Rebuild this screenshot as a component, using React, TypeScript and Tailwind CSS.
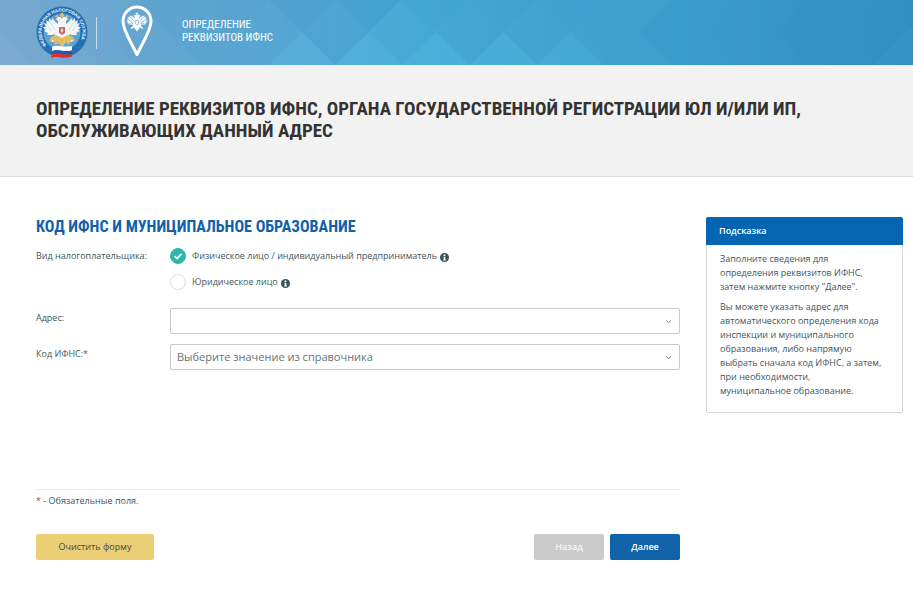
import React, { useState } from "react";

const shades = [
  { d: "M0 32 L33 65 L0 65 Z", fill: "#8fb4d4", opacity: 0.3 },
  { d: "M0 -1 L34 -1 L101 65 L33 65 L0 32 Z", fill: "#8fb4d4", opacity: 0.14 },
  { d: "M134 -1 L201 65 L268 65 L201 -1 Z", fill: "#2f8cc4", opacity: 0.12 },
  { d: "M134 -1 L101 32 L134 65 L201 65 Z", fill: "#3f94cb", opacity: 0.08 },
  { d: "M201 -1 L235 32 L268 -1 Z", fill: "#2f8cc4", opacity: 0.14 },
  { d: "M235 32 L268 65 L302 32 L268 -1 Z", fill: "#3a90c8", opacity: 0.06 },
  { d: "M268 -1 L302 32 L335 -1 Z", fill: "#2b85c0", opacity: 0.2 },
  { d: "M335 -1 L369 32 L402 -1 Z", fill: "#2b85c0", opacity: 0.17 },
  { d: "M335 -1 L369 32 L335 65 L302 32 Z", fill: "#2f8fc6", opacity: 0.12 },
  { d: "M402 -1 L436 32 L470 -1 Z", fill: "#2b8fc4", opacity: 0.08 },
  { d: "M470 -1 L503 32 L470 65 L436 32 Z", fill: "#2b8fc4", opacity: 0.04 },
  { d: "M470 -1 L503 32 L537 -1 Z", fill: "#2b8fc4", opacity: 0.07 },
  { d: "M537 -1 L571 32 L604 -1 Z", fill: "#2b8fc4", opacity: 0.06 },
  { d: "M235 32 L268 65 L201 65 Z", fill: "#5bb4e0", opacity: 0.14 },
  { d: "M269 65 L302 32 L335 65 Z", fill: "#5bc4ea", opacity: 0.2 },
  { d: "M335 65 L369 32 L402 65 Z", fill: "#5bc4ea", opacity: 0.24 },
  { d: "M402 65 L436 32 L470 65 Z", fill: "#5bc4ea", opacity: 0.25 },
  { d: "M470 65 L503 32 L537 65 Z", fill: "#5bc4ea", opacity: 0.25 },
  { d: "M537 65 L571 32 L604 65 Z", fill: "#5bc4ea", opacity: 0.16 },
  { d: "M673 -1 L640 32 L673 65 L740 65 L707 32 L740 -1 Z", fill: "#2794c6", opacity: 0.1 },
  { d: "M740 -1 L707 32 L740 65 L807 65 L773 32 L807 -1 Z", fill: "#2f8ac2", opacity: 0.13 },
  { d: "M807 -1 L773 32 L807 65 L874 65 L840 32 L874 -1 Z", fill: "#2385ba", opacity: 0.16 },
  { d: "M874 -1 L840 32 L874 65 L907 32 L940 -1 Z", fill: "#2079b4", opacity: 0.14 },
];

const HeaderPattern = () => (
  <svg
    className="absolute inset-0 h-full w-full"
    viewBox="0 0 913 65"
    preserveAspectRatio="xMinYMin slice"
    aria-hidden="true"
  >
    {shades.map((s) => (
      <path key={s.d} d={s.d} fill={s.fill} opacity={s.opacity} />
    ))}
  </svg>
);

const eagle =
  "M30 14 L31 12 L34 12 L36 14 L34 16 L34 19 C36 18 37 16 40 13 L40 16 L43 13 L43 17 L46 15 L45 19 L48 18 L46 22 L49 22 L46 25 L48 26 L44 28 L45 30 L40 30 L37 29 L38 33 L42 36 L39 37 L35 35 L33 38 L30 42 L27 38 L25 35 L21 37 L18 36 L22 33 L23 29 L20 30 L15 30 L16 28 L12 26 L14 25 L11 22 L14 22 L12 18 L15 19 L14 15 L17 17 L17 13 L20 16 L20 13 C23 16 24 18 26 19 L26 16 L24 14 L26 12 L29 12 Z";

const Emblem = () => (
  <svg className="h-[60px] w-[60px]" viewBox="0 0 60 60" role="img" aria-label="ФНС">
    <defs>
      <path id="ring" d="M14.500 44.500 A20.500 20.500 0 1 1 45.500 44.500" />
    </defs>
    <circle cx="30" cy="31" r="25.500" fill="#2470b4" />
    <circle cx="30" cy="31" r="18.500" fill="#5aa2d4" />
    <text
      fill="#e8f3fb"
      fontSize="4.500"
      fontWeight="700"
      fontFamily="'Liberation Sans', sans-serif"
    >
      <textPath href="#ring">ФЕДЕРАЛЬНАЯ НАЛОГОВАЯ СЛУЖБА</textPath>
    </text>
    <g transform="translate(0 4)">
      <path d={eagle} fill="#f6f7f5" />
      <path d="M28 10 L30 7 L32 10 L31 12 L29 12 Z M23 12 L25 10 L27 12 Z M33 12 L35 10 L37 12 Z" fill="#e7c35d" />
      <path
        d="M19 32 L24 30 L30 33 L36 30 L41 32 L43 36 L39 35 L37 40 L33 37 L30 42 L27 38 L23 40 L21 35 L17 37 Z"
        fill="#dfbd65"
      />
      <path d="M27 22 H33 V28 L30 30 L27 28 Z" fill="#c9686a" />
      <path d="M30 23 L31.500 25.500 L30 28 L28.500 25.500 Z" fill="#e9d6c9" />
      <path d="M14 19 L20 26 M46 19 L40 26 M17 16 L23 25 M43 16 L37 25" stroke="#b7cddd" strokeWidth=".6" />
    </g>
    <path d="M20 46 C25 43 30 47 40 45 V49.500 C31 51.500 26 47.500 20 50.500 Z" fill="#fff" />
    <path d="M20 50 C26 47.500 31 51.500 40 49.500 V53 C31 55 26 51 20 53.500 Z" fill="#2858a8" />
    <path d="M20 53 C26 51 31 55 40 53 V55.500 C32 58.500 26 54 19 57 Z" fill="#dc3039" />
  </svg>
);

const PinLogo = () => (
  <svg className="h-[52px] w-8" viewBox="0 0 32 52" aria-hidden="true">
    <path
      d="M16 2 C8 2 2 8.500 2 16.500 C2 25 9 35 16 49.500 C23 35 30 25 30 16.500 C30 8.500 24 2 16 2 Z"
      fill="none"
      stroke="#fff"
      strokeWidth="3"
      strokeLinejoin="round"
    />
    <g transform="translate(-.8 3) scale(.56)">
      <path d={eagle} fill="#fff" />
      <path d="M28 10 L30 8 L32 10 L31 12 L29 12 Z" fill="#fff" />
      <path
        d="M13 20 L23 26 M47 20 L37 26 M18 16 L25 24 M42 16 L35 24 M16 29 L24 27 M44 29 L36 27 M27 22 L33 22 L33 28 L30 30 L27 28 Z"
        stroke="#5fa5d2"
        strokeWidth="1.200"
        fill="none"
      />
    </g>
  </svg>
);

const InfoIcon = () => (
  <svg className="h-[9px] w-[9px]" viewBox="0 0 10 10" aria-hidden="true">
    <circle cx="5" cy="5" r="5" fill="#36505c" />
    <path d="M4 1.700 H6 V3.200 H4 Z M3.600 4.100 H6 V7.300 H6.600 V8.300 H3.500 V7.300 H4.100 V5.100 H3.600 Z" fill="#fff" />
  </svg>
);

type SelectFieldProps = {
  id: string;
  label: string;
  required?: boolean;
  placeholder?: string;
};

const SelectField: React.FC<SelectFieldProps> = ({ id, label, required, placeholder = "" }) => (
  <div className="flex">
    <label htmlFor={id} className="w-[134px] shrink-0 pt-1 text-[9px] leading-3 text-[#405560]">
      {label}
      {required && <span className="text-[#d0312d]">*</span>}
    </label>
    <div className="relative flex-1">
      <select
        id={id}
        className="block h-[26px] w-full appearance-none rounded-xs border border-[#c8cacc] bg-white px-[6px] text-[11px] text-[#66727a] outline-none"
      >
        <option>{placeholder}</option>
      </select>
      <svg
        className="pointer-events-none absolute top-[11px] right-2 h-[5px] w-[7px]"
        viewBox="0 0 7 5"
        aria-hidden="true"
      >
        <path d="M1 1.500 L3.500 3.500 L6 1.500" fill="none" stroke="#7d878d" strokeWidth="1" />
      </svg>
    </div>
  </div>
);

const payerTypes = [
  { value: "fl", label: "Физическое лицо / индивидуальный предприниматель" },
  { value: "ul", label: "Юридическое лицо" },
];

const App: React.FC = () => {
  const [payer, setPayer] = useState("fl");

  return (
    <div className="min-h-screen bg-white font-['Open_Sans','Noto_Sans',sans-serif] text-[9px] text-[#405560]">
      <header className="relative h-[66px] border-b border-[#e3f3fa] bg-linear-to-r from-[#75a7cf] via-[#47a9d5] via-45% to-[#3593c4]">
        <HeaderPattern />
        <div className="relative flex h-full items-center pl-8">
          <a href="#" className="-mt-1">
            <Emblem />
          </a>
          <span className="ml-1 h-8 w-px bg-white/60" />
          <a
            href="#"
            className="-mt-1 ml-6 flex items-center gap-[29px] font-['Roboto_Condensed',Roboto,sans-serif] text-[11px] leading-[13px] text-white"
          >
            <PinLogo />
            <span>
              ОПРЕДЕЛЕНИЕ
              <br />
              РЕКВИЗИТОВ ИФНС
            </span>
          </a>
        </div>
      </header>

      <section className="border-b border-[#dcdcdc] bg-[#f2f2f2] px-9 pt-8 pb-[34px]">
        <h1 className="font-['Roboto_Condensed',Roboto,sans-serif] text-[19px] leading-[22px] font-bold text-[#333]">
          ОПРЕДЕЛЕНИЕ РЕКВИЗИТОВ ИФНС, ОРГАНА ГОСУДАРСТВЕННОЙ РЕГИСТРАЦИИ ЮЛ И/ИЛИ ИП,
          ОБСЛУЖИВАЮЩИХ ДАННЫЙ АДРЕС
        </h1>
      </section>

      <main className="flex items-start gap-[26px] pt-10 pr-[10px] pb-7 pl-9">
        <form className="min-w-0 flex-1" onSubmit={(e) => e.preventDefault()}>
          <h2 className="font-['Roboto_Condensed',Roboto,sans-serif] text-[16px] leading-5 font-bold text-[#1261a8]">
            КОД ИФНС И МУНИЦИПАЛЬНОЕ ОБРАЗОВАНИЕ
          </h2>

          <fieldset className="mt-[11px] flex">
            <legend className="float-left w-[134px] pt-[2px] leading-3">Вид налогоплательщика:</legend>
            <div className="space-y-[10px]">
              {payerTypes.map((p) => (
                <div key={p.value} className="flex items-center">
                  <span className="relative h-4 w-4">
                    <input
                      type="radio"
                      id={p.value}
                      name="payer"
                      checked={payer === p.value}
                      onChange={() => setPayer(p.value)}
                      className="block h-4 w-4 appearance-none rounded-full border border-[#d9dcde] bg-white checked:border-[#2bb8ac] checked:bg-[#2bb8ac]"
                    />
                    {payer === p.value && (
                      <svg className="pointer-events-none absolute inset-0 h-4 w-4" viewBox="0 0 16 16">
                        <path d="M4.500 8.200 L7 10.500 L11.500 5.800" fill="none" stroke="#fff" strokeWidth="1.800" />
                      </svg>
                    )}
                  </span>
                  <label htmlFor={p.value} className="ml-[6px] leading-4">
                    {p.label}
                  </label>
                  <span className="mt-[2px] ml-[3px]">
                    <InfoIcon />
                  </span>
                </div>
              ))}
            </div>
          </fieldset>

          <div className="mt-[18px] space-y-[10px]">
            <SelectField id="address" label="Адрес:" />
            <SelectField
              id="code"
              label="Код ИФНС:"
              required
              placeholder="Выберите значение из справочника"
            />
          </div>

          <p className="mt-[119px] border-t border-[#e6e6e6] pt-[5px] leading-3">
            <span className="text-[#d0312d]">*</span> - Обязательные поля.
          </p>

          <div className="mt-[27px] flex gap-[6px]">
            <button
              type="reset"
              className="mr-auto h-[26px] w-[118px] rounded-xs bg-[#ebcf77] text-[#4b4733]"
              onClick={() => setPayer("fl")}
            >
              Очистить форму
            </button>
            <button type="button" disabled className="h-[26px] w-[70px] rounded-xs bg-[#cbcbcc] font-semibold text-[#f4f4f4]">
              Назад
            </button>
            <button type="submit" className="h-[26px] w-[70px] rounded-xs bg-[#1163a9] font-semibold text-white">
              Далее
            </button>
          </div>
        </form>

        <aside className="w-[197px] shrink-0 rounded-xs border border-[#d3d8db]">
          <h3 className="-mx-px -mt-px rounded-t-xs bg-[#0466b3] px-[13px] py-[6px] leading-4 font-semibold text-white">
            Подсказка
          </h3>
          <div className="space-y-[6px] pt-[7px] pr-[19px] pb-[14px] pl-[13px] leading-[14px]">
            <p>Заполните сведения для определения реквизитов ИФНС, затем нажмите кнопку "Далее".</p>
            <p>
              Вы можете указать адрес для автоматического определения кода инспекции и
              муниципального образования, либо напрямую выбрать сначала код ИФНС, а затем, при
              необходимости, муниципальное образование.
            </p>
          </div>
        </aside>
      </main>
    </div>
  );
};

export default App;
